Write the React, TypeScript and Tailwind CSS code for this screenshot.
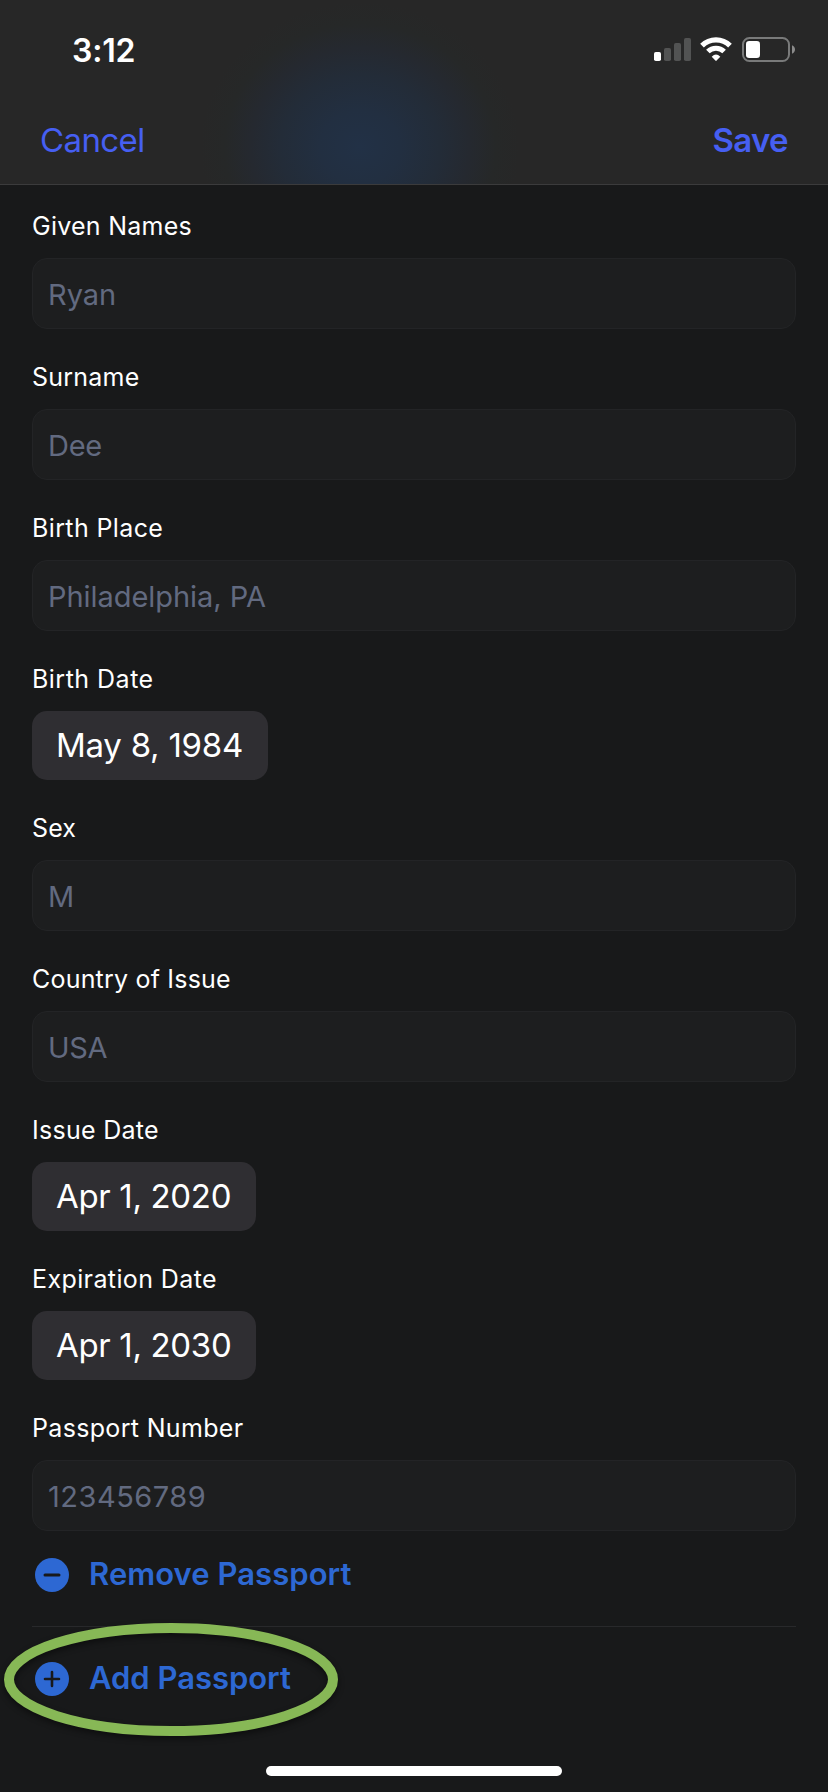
type Field = {
  label: string;
  labelTracking: string;
  value: string;
  valueTracking: string;
  kind: 'text' | 'date';
  width?: string;
};

const fields: Field[] = [
  { label: 'Given Names', labelTracking: 'tracking-[0.25px]', value: 'Ryan', valueTracking: 'tracking-[-0.03px]', kind: 'text' },
  { label: 'Surname', labelTracking: 'tracking-[0.23px]', value: 'Dee', valueTracking: 'tracking-[-0.3px]', kind: 'text' },
  { label: 'Birth Place', labelTracking: 'tracking-[0.38px]', value: 'Philadelphia, PA', valueTracking: 'tracking-[-0.05px]', kind: 'text' },
  { label: 'Birth Date', labelTracking: 'tracking-[0.48px]', value: 'May 8, 1984', valueTracking: 'tracking-[-0.25px]', kind: 'date', width: 'w-[236px]' },
  { label: 'Sex', labelTracking: 'tracking-[0.12px]', value: 'M', valueTracking: 'tracking-normal', kind: 'text' },
  { label: 'Country of Issue', labelTracking: 'tracking-[0.2px]', value: 'USA', valueTracking: 'tracking-[-0.4px]', kind: 'text' },
  { label: 'Issue Date', labelTracking: 'tracking-[0.28px]', value: 'Apr 1, 2020', valueTracking: 'tracking-[-0.33px]', kind: 'date', width: 'w-[224px]' },
  { label: 'Expiration Date', labelTracking: 'tracking-[0.39px]', value: 'Apr 1, 2030', valueTracking: 'tracking-[-0.33px]', kind: 'date', width: 'w-[224px]' },
  { label: 'Passport Number', labelTracking: 'tracking-[0.33px]', value: '123456789', valueTracking: 'tracking-[0.5px]', kind: 'text' },
];

function SignalIcon() {
  return (
    <svg width="37" height="23" viewBox="0 0 37 23">
      <rect x="0" y="14" width="7" height="9" rx="1.8" fill="#fff" />
      <rect x="10" y="10" width="7" height="13" rx="1.8" fill="#525353" />
      <rect x="20" y="5" width="7" height="18" rx="1.8" fill="#525353" />
      <rect x="30" y="0" width="7" height="23" rx="1.8" fill="#525353" />
    </svg>
  );
}

function WifiIcon() {
  return (
    <svg width="32" height="24" viewBox="0 0 32 24" fill="none">
      <path d="M2 8.6A19.8 19.8 0 0 1 30 8.6" stroke="#fff" strokeWidth="5.2" />
      <path d="M7.9 14.6A11.4 11.4 0 0 1 24.1 14.6" stroke="#fff" strokeWidth="5" />
      <path d="M11.7 19.7Q16 15.2 20.3 19.7L16.6 23.6Q16 24.2 15.4 23.6Z" fill="#fff" />
    </svg>
  );
}

function BatteryIcon() {
  return (
    <svg width="53" height="25" viewBox="0 0 53 25">
      <rect x="1" y="1" width="46" height="23" rx="6.5" fill="none" stroke="#797a7a" strokeWidth="2" />
      <rect x="4" y="4" width="14" height="17" rx="3.2" fill="#fff" />
      <path d="M50 8.2C52 9 53 10.6 53 12.5S52 16 50 16.8Z" fill="#8b8b8b" />
    </svg>
  );
}

function CircleIcon({ plus }: { plus?: boolean }) {
  return (
    <svg width="34" height="34" viewBox="0 0 34 34" className="shrink-0">
      <circle cx="17" cy="17" r="17" fill="#2d68d3" />
      <path d={plus ? 'M10 17H24M17 10V24' : 'M10 17H24'} stroke="#18191a" strokeWidth={plus ? 2.6 : 3} strokeLinecap="round" />
    </svg>
  );
}

function FormField({ field }: { field: Field }) {
  return (
    <div className="flex flex-col gap-4">
      <div className={`h-8 text-[25px] leading-8 text-white ${field.labelTracking}`}>{field.label}</div>
      {field.kind === 'text' ? (
        <div className={`h-[71px] rounded-[15px] border border-[#232426] bg-[#1d1e1f] pl-[15px] pt-px text-[29px] leading-[69px] text-[#626a80] ${field.valueTracking}`}>
          {field.value}
        </div>
      ) : (
        <div className={`h-[69px] rounded-[15px] bg-[#2f2e32] pl-6 text-[33px] leading-[69px] text-white ${field.width} ${field.valueTracking}`}>
          {field.value}
        </div>
      )}
    </div>
  );
}

export default function App() {
  return (
    <div className="relative flex h-[1792px] w-[828px] flex-col overflow-hidden bg-[#18191a] font-['Inter',sans-serif]">
      <header className="flex h-[185px] shrink-0 flex-col border-b border-[#3b3b3c] bg-[#272727] bg-[radial-gradient(ellipse_160px_145px_at_360px_147px,#223146_0%,#222f41_25%,#232c38_50%,#252930_68%,#262828_85%,#272727_100%)]">
        <div className="flex h-[99px] items-start justify-between pl-[72px] pr-[33px] pt-[30px]">
          <div className="pt-px text-[32px] font-semibold leading-10 tracking-[-0.2px] text-white">3:12</div>
          <div className="flex items-start pt-[7px]">
            <div className="mr-[9px] pt-px"><SignalIcon /></div>
            <div className="mr-[10px]"><WifiIcon /></div>
            <BatteryIcon />
          </div>
        </div>
        <div className="flex h-[85px] items-start justify-between pl-10 pr-10 pt-[21px] text-[33px] leading-10 text-[#465ff2]">
          <div className="tracking-[-0.6px]">Cancel</div>
          <div className="font-semibold tracking-[-0.65px]">Save</div>
        </div>
      </header>

      <main className="flex flex-col px-8 pt-[25px]">
        <div className="flex flex-col gap-8">
          {fields.map((field) => (
            <FormField key={field.label} field={field} />
          ))}
        </div>
        <div className="mt-6 flex h-10 items-center gap-5 pl-[3px]">
          <CircleIcon />
          <span className="pb-[2px] text-[31px] font-semibold leading-10 tracking-[0.05px] text-[#2d68d3]">Remove Passport</span>
        </div>
        <div className="mt-[31px] h-px bg-[#28292b]" />
        <div className="mt-8 flex h-10 items-center gap-5 pl-[3px]">
          <CircleIcon plus />
          <span className="pb-[2px] text-[31px] font-semibold leading-10 tracking-[-0.03px] text-[#2d68d3]">Add Passport</span>
        </div>
      </main>

      <div className="mx-auto mb-4 mt-auto h-[10px] w-[296px] shrink-0 rounded-full bg-white" />

      <svg className="absolute left-0 top-[1613px] drop-shadow-[0_3px_3px_rgba(0,0,0,0.45)]" width="350" height="135" viewBox="0 0 350 135" fill="none">
        <ellipse cx="171" cy="66.5" rx="162" ry="51.5" stroke="#87b856" strokeWidth="10" />
      </svg>
    </div>
  );
}
